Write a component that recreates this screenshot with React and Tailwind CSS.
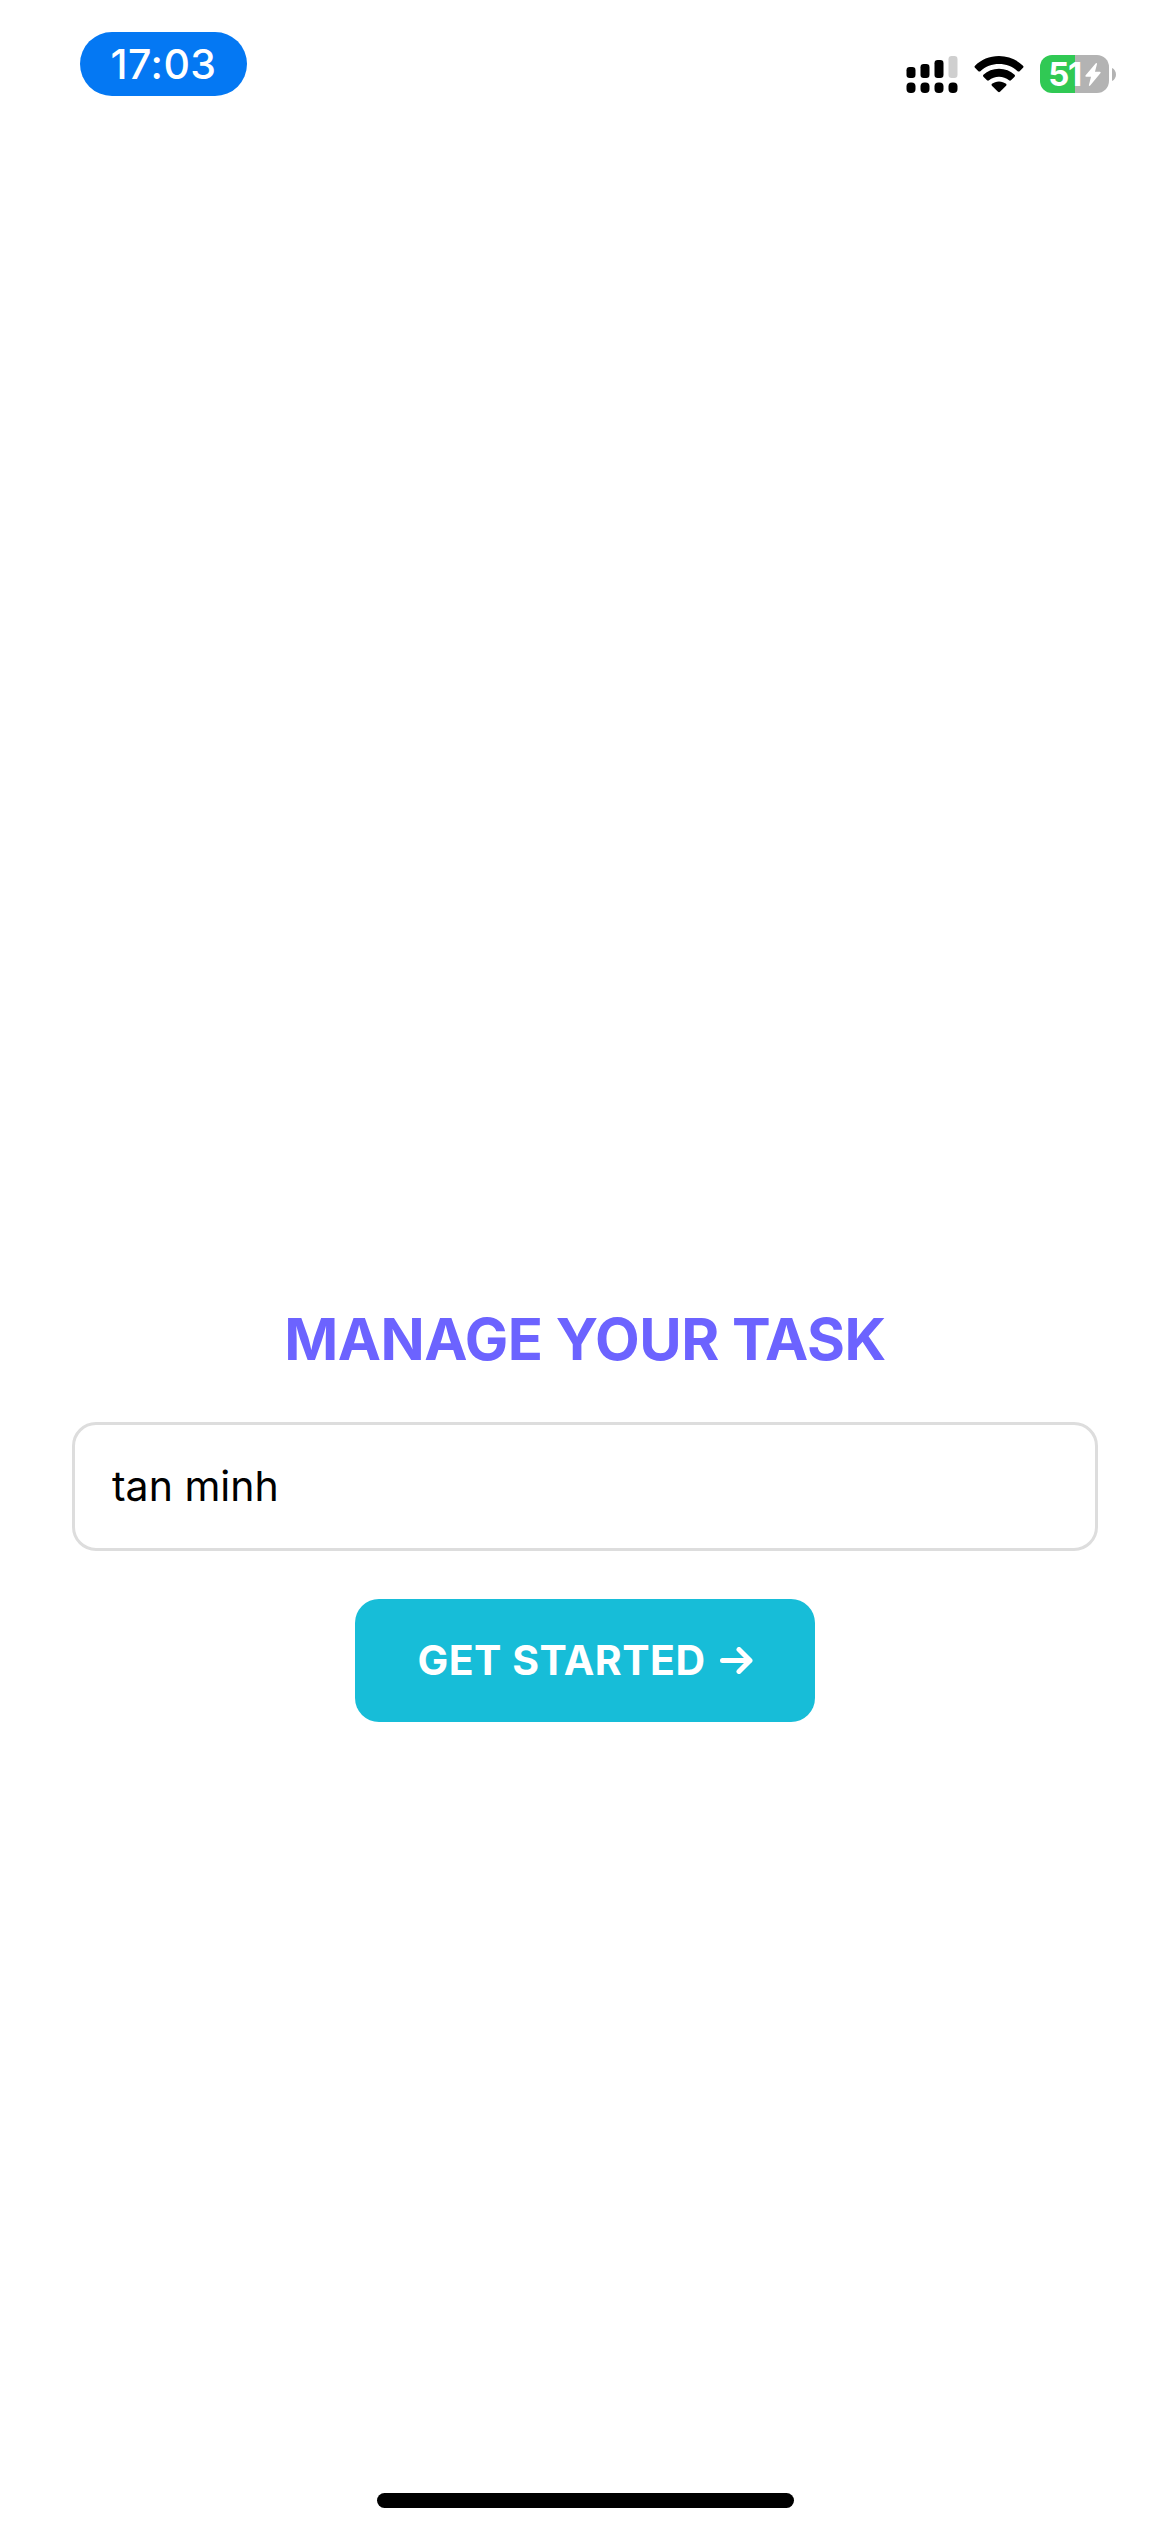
function SignalIcon() {
  const bars = [
    { x: 907, y: 67, h: 11 },
    { x: 921, y: 64, h: 14 },
    { x: 935, y: 60, h: 18 },
  ];
  return (
    <svg className="h-[38px] w-[52px]" viewBox="906.5 55 52 38" aria-hidden="true">
      {bars.map((b) => (
        <rect key={b.x} x={b.x} y={b.y} width="9" height={b.h} rx="3.2" />
      ))}
      <rect x="949" y="56" width="9" height="22" rx="3.2" fill="#cfcfcf" />
      {[907, 921, 935, 949].map((x) => (
        <rect key={x} x={x} y="82.5" width="9" height="10.5" rx="4" />
      ))}
    </svg>
  );
}

function WifiIcon() {
  return (
    <svg className="h-[37px] w-[50px]" viewBox="0 0 50 37" aria-hidden="true">
      <path d="M25 0C34.5 0 43 3.700 49 9.700Q50 10.800 49 11.800L45.600 15.200Q44.600 16 43.600 15.200C38.500 10.500 32 8 25 8S11.500 10.500 6.400 15.200Q5.400 16 4.400 15.200L1 11.800Q0 10.800 1 9.700C7 3.700 15.500 0 25 0Z" />
      <path d="M25 12.800C31 12.800 36.500 15 40.600 18.800Q41.500 19.800 40.600 20.800L37 24.300Q36 25.200 35 24.300C32.200 22 28.800 20.700 25 20.700S17.800 22 15 24.300Q14 25.200 13 24.300L9.400 20.800Q8.500 19.800 9.400 18.800C13.500 15 19 12.800 25 12.800Z" />
      <path d="M25 25.400C27.700 25.400 30.200 26.300 32.100 27.800Q33 28.800 32.100 29.800L26 35.800Q25 36.700 24 35.800L17.900 29.800Q17 28.800 17.900 27.800C19.800 26.300 22.300 25.400 25 25.400Z" />
    </svg>
  );
}

function Battery() {
  return (
    <div className="flex items-center gap-[3px]">
      <div className="flex h-[38px] w-[69px] items-center justify-center rounded-[12px] bg-[linear-gradient(90deg,#30c954_51%,#b3b3b3_51%)] text-white">
        <span className="text-[33px] leading-[38px] font-bold tracking-[-1.5px]">51</span>
        <svg className="ml-[4px] h-[25px] w-[16px]" viewBox="0 0 17 25" fill="currentColor" aria-hidden="true">
          <path d="M11.500.5Q13 0 12.700 1.500L10.600 9.700H15.800Q17.200 10 16.300 11.300L5.500 24.300Q3.800 25.300 4.200 23.600L6.400 14.800H1.200Q-.2 14.500.7 13.200Z" />
        </svg>
      </div>
      <svg className="h-[13px] w-[4px]" viewBox="0 0 4 13" fill="#b3b3b3" aria-hidden="true">
        <path d="M0 0C5.300 2.200 5.300 10.800 0 13Z" />
      </svg>
    </div>
  );
}

function StatusBar() {
  return (
    <header className="flex h-24 items-end justify-between pr-[54px] pl-20">
      <div className="flex h-16 w-[167px] items-center justify-center rounded-full bg-[#0478f3] text-[41px] leading-none font-medium tracking-[0.5px] text-white">
        17:03
      </div>
      <div className="flex items-center pb-[3px]">
        <SignalIcon />
        <div className="ml-4">
          <WifiIcon />
        </div>
        <div className="ml-4">
          <Battery />
        </div>
      </div>
    </header>
  );
}

export default function App() {
  return (
    <div className="flex h-[2532px] w-[1170px] flex-col bg-white font-['Inter',sans-serif] text-black">
      <StatusBar />
      <main className="flex flex-1 flex-col items-center px-[72px] pt-[1207px]">
        <h1 className="text-[58px] leading-[72px] font-bold tracking-[-0.5px] whitespace-nowrap text-[#6c63ff]">MANAGE YOUR TASK</h1>
        <input
          type="text"
          defaultValue="tan minh"
          className="mt-[47px] h-[129px] w-full rounded-3xl border-3 border-[#ddd] px-[37px] pb-[2px] text-[41px] outline-none"
        />
        <button className="mt-12 flex h-[123px] w-[460px] items-center justify-center rounded-3xl bg-[#17bdd8] text-[41px] font-bold tracking-[0.5px] text-white">
          <span className="whitespace-nowrap">GET STARTED</span>
          <svg className="ml-[14px] h-[27px] w-[33px]" viewBox="0 0 33 27" fill="none" stroke="currentColor" strokeWidth="5" strokeLinecap="round" strokeLinejoin="round" aria-hidden="true">
            <path d="M2.500 13.500H30M19 2.500L30 13.500L19 24.500" />
          </svg>
        </button>
      </main>
      <footer className="flex justify-center pb-6">
        <div className="h-[15px] w-[417px] rounded-full bg-black" />
      </footer>
    </div>
  );
}
